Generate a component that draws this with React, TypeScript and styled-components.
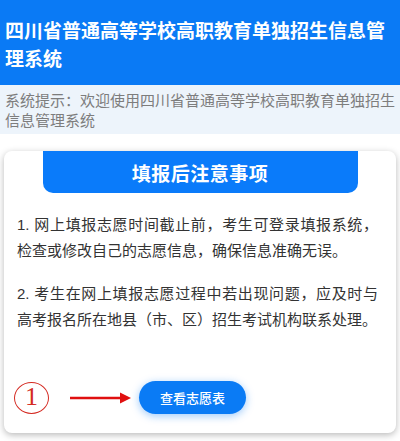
import * as React from 'react';
import styled, { createGlobalStyle } from 'styled-components';

const GlobalStyle = createGlobalStyle`
  html, body {
    margin: 0;
    padding: 0;
    background: #ffffff;
    font-family: "Noto Sans CJK SC", "Noto Sans", sans-serif;
  }
  * {
    box-sizing: border-box;
  }
`;

const Page = styled.div`
  width: 400px;
  min-height: 441px;
  display: flex;
  flex-direction: column;
`;

const Header = styled.header`
  background: #0a7af5;
  color: #ffffff;
  padding: 16px 5px 13px 5px;
  font-size: 19px;
  font-weight: 700;
  line-height: 28px;
`;

const Notice = styled.div`
  background: #edf4fb;
  color: #7d7d7d;
  padding: 5px 4px 4px 5px;
  font-size: 15px;
  line-height: 20px;
`;

const Card = styled.section`
  margin: 17px 4px 8px 4px;
  height: 282px;
  background: #ffffff;
  border-radius: 8px;
  box-shadow: 0 2px 7px rgba(0, 0, 0, 0.28);
  display: flex;
  flex-direction: column;
  align-items: center;
`;

const Banner = styled.div`
  width: 315px;
  height: 42px;
  background: #0a7bfa;
  border-radius: 0 0 10px 10px;
  color: #ffffff;
  font-size: 19px;
  font-weight: 700;
  display: flex;
  align-items: center;
  justify-content: center;
  letter-spacing: 0.5px;
`;

const Content = styled.div`
  align-self: stretch;
  padding: 19px 18px 0 13px;
  display: flex;
  flex-direction: column;
  gap: 17px;
`;

const Para = styled.p`
  margin: 0;
  font-family: "Liberation Sans", "Noto Sans CJK SC", sans-serif;
  font-size: 15px;
  line-height: 26px;
  color: #333333;
  text-align: justify;
`;

const ActionRow = styled.div`
  align-self: stretch;
  margin-top: auto;
  padding: 0 0 19px 10px;
  display: flex;
  align-items: center;
`;

const Circled = styled.span`
  width: 35px;
  height: 32px;
  border: 1.8px solid #d42a22;
  border-radius: 50%;
  color: #d42a22;
  font-family: "Liberation Serif", serif;
  font-size: 26px;
  line-height: 1;
  display: flex;
  align-items: center;
  justify-content: center;
  padding-bottom: 1px;
`;

const Arrow = styled.svg`
  margin-left: 21px;
  width: 62px;
  height: 14px;
`;

const ViewButton = styled.button`
  margin-left: 7px;
  width: 107px;
  height: 33px;
  border: none;
  border-radius: 17px;
  background: #0a7bf5;
  color: #ffffff;
  font-family: "Noto Sans CJK SC", sans-serif;
  font-size: 13px;
  font-weight: 500;
  box-shadow: 0 2px 8px rgba(10, 123, 245, 0.4);
  cursor: pointer;
`;

const paragraphs = [
  '1. 网上填报志愿时间截止前，考生可登录填报系统，检查或修改自己的志愿信息，确保信息准确无误。',
  '2. 考生在网上填报志愿过程中若出现问题，应及时与高考报名所在地县（市、区）招生考试机构联系处理。'
];

export default function App() {
  return (
    <>
      <GlobalStyle />
      <Page>
        <Header>四川省普通高等学校高职教育单独招生信息管理系统</Header>
        <Notice>系统提示：欢迎使用四川省普通高等学校高职教育单独招生信息管理系统</Notice>
        <Card>
          <Banner>填报后注意事项</Banner>
          <Content>
            {paragraphs.map(text => (
              <Para key={text}>{text}</Para>
            ))}
          </Content>
          <ActionRow>
            <Circled>1</Circled>
            <Arrow viewBox="0 0 62 14">
              <line x1="0" y1="7" x2="52" y2="7" stroke="#e01010" strokeWidth="2.5" />
              <polygon points="50,1.5 61,7 50,12.5" fill="#e01010" />
            </Arrow>
            <ViewButton>查看志愿表</ViewButton>
          </ActionRow>
        </Card>
      </Page>
    </>
  );
}
